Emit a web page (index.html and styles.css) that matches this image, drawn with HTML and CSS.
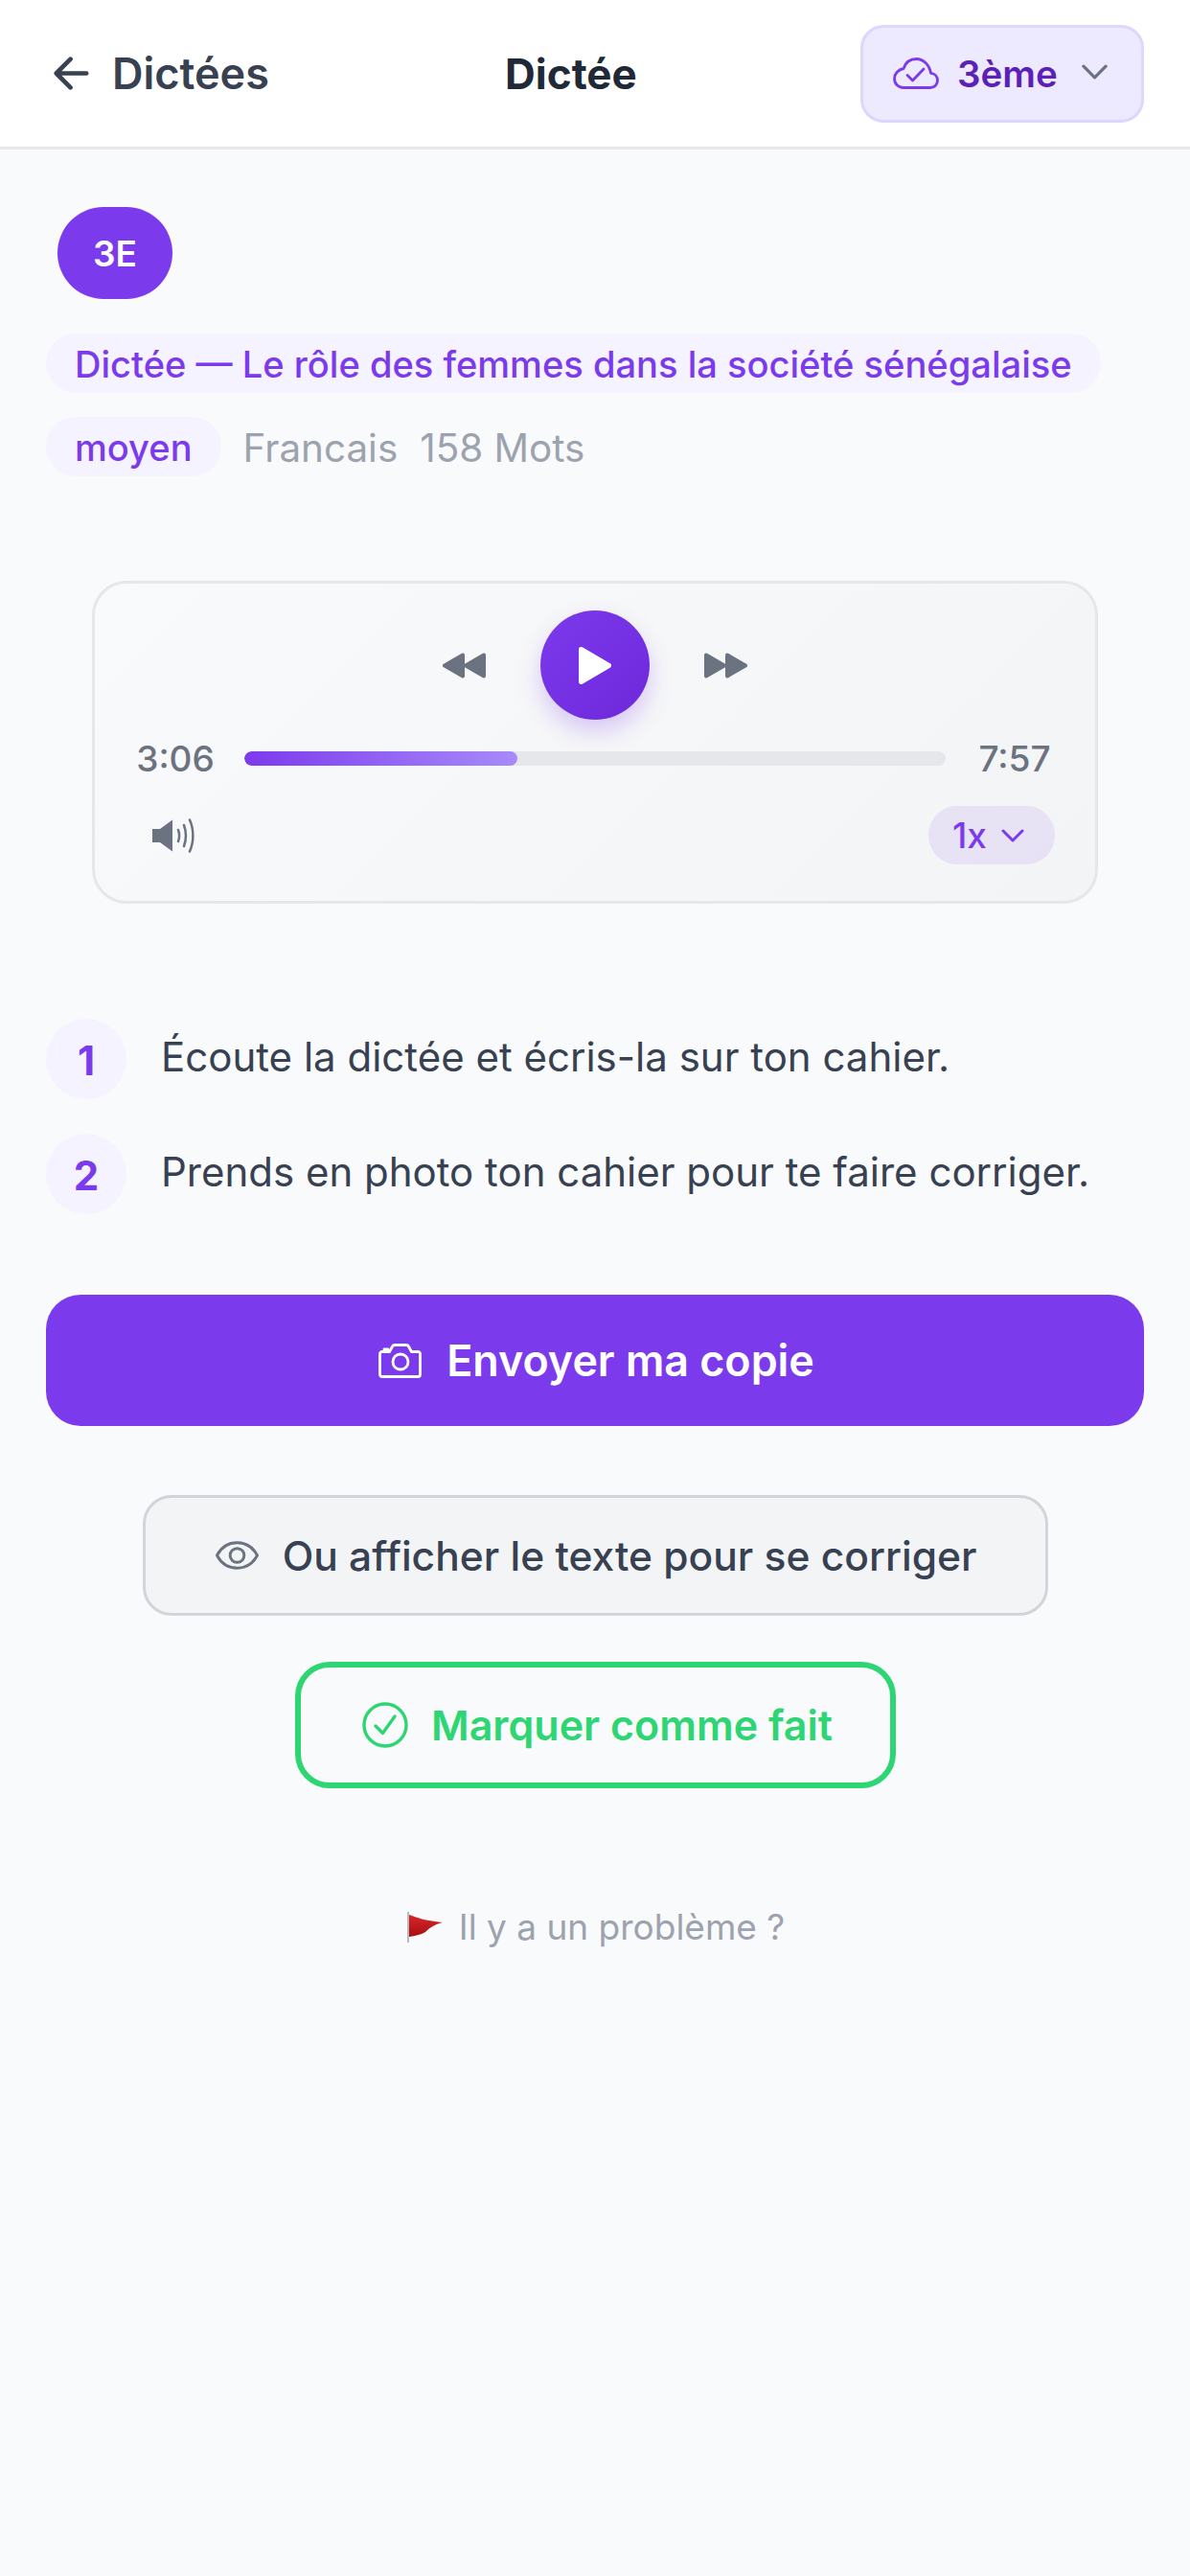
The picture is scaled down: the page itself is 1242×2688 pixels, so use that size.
FILE: index.html
```html
<!DOCTYPE html>
<html lang="fr">
<head>
    <meta charset="UTF-8">
    <title>Dictée</title>
    <link rel="stylesheet" href="styles.css">
</head>
<body>
    <header class="topbar">
        <div class="back">
            <svg class="back-icon" viewBox="0 0 40 40" fill="none" stroke="currentColor" stroke-width="5" stroke-linecap="round" stroke-linejoin="round">
                <path d="M37 20H3M19 4L3 20l16 16"/>
            </svg>
            <span>Dictées</span>
        </div>
        <div class="topbar-title">Dictée</div>
        <div class="level-select">
            <svg class="cloud-icon" viewBox="0 0 48 33" fill="none" stroke="#7c3aed" stroke-width="2.8" stroke-linecap="round" stroke-linejoin="round">
                <path d="M11 31.500h28c4.500 0 7.500-3.500 7.500-7.500 0-4.200-3-7.300-7-7.700C38 8 32 1.500 24.500 1.500c-6.500 0-11.500 4-13.500 10C5.500 12.500 1.500 17 1.500 22c0 5.500 4 9.500 9.500 9.500z"/>
                <path d="M15 18.500l5.500 5.500L32 12"/>
            </svg>
            <span class="level-label">3ème</span>
            <svg class="chevron-grey" viewBox="0 0 28 16" fill="none" stroke="#6b7280" stroke-width="3.400" stroke-linecap="round" stroke-linejoin="round">
                <path d="M2 2l12 12L26 2"/>
            </svg>
        </div>
    </header>

    <main class="page">
        <div class="class-badge">3E</div>
        <div class="chip chip-title">Dictée — Le rôle des femmes dans la société sénégalaise</div>
        <div class="meta-row">
            <div class="chip">moyen</div>
            <span class="meta-text">Francais</span>
            <span class="meta-text">158 Mots</span>
        </div>

        <!-- Audio player -->
        <section class="player">
            <div class="player-controls">
                <svg class="skip-icon" viewBox="0 0 45 27" fill="#6b7280" stroke="#6b7280" stroke-width="4" stroke-linejoin="round">
                    <path d="M2 13.500L21 2.500v22zM24 13.500L43 2.500v22z"/>
                </svg>
                <div class="play-btn">
                    <svg class="play-icon" viewBox="0 0 34 39" fill="#fff" stroke="#fff" stroke-width="5" stroke-linejoin="round">
                        <path d="M2.500 2.500l29 17-29 17z"/>
                    </svg>
                </div>
                <svg class="skip-icon" viewBox="0 0 45 27" fill="#6b7280" stroke="#6b7280" stroke-width="4" stroke-linejoin="round">
                    <path d="M2 2.500l19 11-19 11zM24 2.500l19 11-19 11z"/>
                </svg>
            </div>
            <div class="progress-row">
                <span class="time">3:06</span>
                <div class="progress-track">
                    <div class="progress-fill" style="width: 39%"></div>
                </div>
                <span class="time">7:57</span>
            </div>
            <div class="player-bottom">
                <svg class="volume-icon" viewBox="0 0 47 36" fill="none" stroke="#6b7280" stroke-width="2.500" stroke-linecap="round">
                    <path d="M1 11h8L22 1.500v33L9 25H1z" fill="#6b7280" stroke="none"/>
                    <path d="M28 12c1.500 4 1.500 8 0 12"/>
                    <path d="M34 7c2.500 7 2.500 15 0 22"/>
                    <path d="M40 1.500c4.500 10 4.500 23 0 33"/>
                </svg>
                <div class="speed-select">
                    <span>1x</span>
                    <svg class="chevron-purple" viewBox="0 0 24 14" fill="none" stroke="#7c3aed" stroke-width="3" stroke-linecap="round" stroke-linejoin="round">
                        <path d="M2 2l10 10L22 2"/>
                    </svg>
                </div>
            </div>
        </section>

        <ol class="steps">
            <li class="step">
                <span class="step-num">1</span>
                <span class="step-text">Écoute la dictée et écris-la sur ton cahier.</span>
            </li>
            <li class="step">
                <span class="step-num">2</span>
                <span class="step-text">Prends en photo ton cahier pour te faire corriger.</span>
            </li>
        </ol>

        <div class="btn btn-primary">
            <svg class="camera-icon" viewBox="0 0 46 36" fill="none" stroke="#fff" stroke-width="2.800" stroke-linecap="round" stroke-linejoin="round">
                <path d="M3.500 8.500h8l3-5.500c.5-1 1.200-1.500 2.500-1.500h12c1.300 0 2 .5 2.500 1.500l3 5.500h7c1 0 2 1 2 2v21.500c0 1.500-1 2.500-2 2.500H3.500c-1 0-2-1-2-2.500V10.500c0-1 1-2 2-2z"/>
                <path d="M6 8.500V6h4"/>
                <circle cx="23" cy="19" r="8"/>
            </svg>
            <span>Envoyer ma copie</span>
        </div>

        <div class="btn btn-secondary">
            <svg class="eye-icon" viewBox="0 0 46 30" fill="none" stroke="#6b7280" stroke-width="3" stroke-linecap="round" stroke-linejoin="round">
                <path d="M1.500 15C6 6.500 14 1.500 23 1.500S40 6.500 44.500 15C40 23.500 32 28.500 23 28.500S6 23.500 1.500 15z"/>
                <circle cx="23" cy="15" r="7.500"/>
            </svg>
            <span>Ou afficher le texte pour se corriger</span>
        </div>

        <div class="btn btn-done">
            <svg class="check-icon" viewBox="0 0 48 48" fill="none" stroke="#2ed573" stroke-width="3.400" stroke-linecap="round" stroke-linejoin="round">
                <circle cx="24" cy="24" r="22"/>
                <path d="M14 25l7.500 7.500L34 15"/>
            </svg>
            <span>Marquer comme fait</span>
        </div>

        <div class="report">
            <svg class="flag-icon" viewBox="0 0 38 32">
                <defs>
                    <linearGradient id="flag-red" x1="0" y1="0" x2="0" y2="1">
                        <stop offset="0" stop-color="#d8262a"/>
                        <stop offset="1" stop-color="#a90f12"/>
                    </linearGradient>
                </defs>
                <path d="M1 0v32" stroke="#9ca3af" stroke-width="1.500"/>
                <path d="M2 3c8 3 16 6 35 8-8 2-13 5-18 10-5 3-11 4-17 5z" fill="url(#flag-red)"/>
            </svg>
            <span>Il y a un problème ?</span>
        </div>
    </main>
</body>
</html>
```

FILE: styles.css
```css
:root {
    --primary: #7c3aed;
    --primary-dark: #5b21b6;
    --primary-soft: #f5f3ff;
    --text-dark: #1f2937;
    --text-main: #374151;
    --text-grey: #6b7280;
    --text-light: #9ca3af;
    --green: #2ed573;
}

* {
    margin: 0;
    padding: 0;
    box-sizing: border-box;
}

body {
    min-height: 2688px;
    background: #f9fafb;
    font-family: Inter, "Noto Sans", sans-serif;
    color: var(--text-main);
}

/* Top bar */
.topbar {
    height: 156px;
    padding: 0 48px 0 56px;
    background: #fff;
    border-bottom: 3px solid #e5e7eb;
    display: flex;
    align-items: center;
    justify-content: space-between;
}

.back {
    display: flex;
    align-items: center;
    gap: 24px;
    padding-right: 13px;
    font-size: 45px;
    font-weight: 600;
    color: var(--text-main);
}

.back-icon {
    width: 37px;
    height: 37px;
}

.topbar-title {
    font-size: 44px;
    font-weight: 700;
    color: var(--text-dark);
}

.level-select {
    width: 296px;
    height: 102px;
    background: #ede9fe;
    border: 3px solid #ddd6fe;
    border-radius: 24px;
    display: flex;
    align-items: center;
    padding-left: 31px;
    font-size: 38.5px;
    font-weight: 600;
    color: var(--primary-dark);
}

.cloud-icon {
    width: 48px;
    height: 33px;
}

.level-label {
    margin-left: 19px;
}

.chevron-grey {
    width: 27px;
    height: 16px;
    margin-left: 25px;
    margin-top: -3px;
}

/* Content */
.page {
    padding: 60px 48px 0;
}

.class-badge {
    width: 120px;
    height: 96px;
    margin-left: 12px;
    border-radius: 48px;
    background: var(--primary);
    color: #fff;
    font-size: 37px;
    font-weight: 600;
    display: flex;
    align-items: center;
    justify-content: center;
}

.chip {
    display: inline-flex;
    align-items: center;
    height: 62px;
    padding: 2px 30px 0;
    border-radius: 31px;
    background: var(--primary-soft);
    color: var(--primary);
    font-size: 38.1px;
    font-weight: 500;
}

.chip-title {
    margin-top: 36px;
}

.meta-row {
    margin-top: 25px;
    display: flex;
    align-items: center;
    gap: 23px;
}

.meta-text {
    padding-top: 2px;
    font-size: 40.4px;
    color: var(--text-light);
}

/* Audio player */
.player {
    width: 1050px;
    height: 337px;
    margin: 109px 0 0 48px;
    padding: 28px 42px 0;
    border: 3px solid #e5e7eb;
    border-radius: 36px;
    background: linear-gradient(135deg, #f9fafb, #f3f4f6);
}

.player-controls {
    display: flex;
    align-items: center;
    justify-content: center;
    gap: 57px;
}

.skip-icon {
    width: 45px;
    height: 27px;
}

.play-btn {
    width: 114px;
    height: 114px;
    border-radius: 50%;
    background: linear-gradient(135deg, #7c3aed, #6d28d9);
    box-shadow: 0 12px 24px rgba(124, 58, 237, 0.25);
    display: flex;
    align-items: center;
    justify-content: center;
}

.play-icon {
    width: 34px;
    height: 39px;
}

.progress-row {
    margin-top: 18px;
    display: flex;
    align-items: center;
    gap: 30px;
}

.time {
    width: 84px;
    text-align: center;
    font-size: 37px;
    font-weight: 500;
    color: var(--text-grey);
}

.progress-track {
    flex: 1;
    height: 15px;
    border-radius: 8px;
    background: #e5e7eb;
    overflow: hidden;
}

.progress-fill {
    height: 100%;
    border-radius: 8px;
    background: linear-gradient(90deg, #7c3aed, #a78bfa);
}

.player-bottom {
    margin-top: 27px;
    display: flex;
    align-items: center;
    justify-content: space-between;
    padding-left: 17px;
}

.volume-icon {
    width: 47px;
    height: 36px;
}

.speed-select {
    width: 132px;
    height: 61px;
    padding-left: 25px;
    border-radius: 30px;
    background: rgba(124, 58, 237, 0.1);
    display: flex;
    align-items: center;
    gap: 15px;
    color: var(--primary);
    font-size: 37px;
    font-weight: 500;
}

.chevron-purple {
    width: 24px;
    height: 14px;
}

/* Steps */
.steps {
    list-style: none;
    margin-top: 120px;
    display: flex;
    flex-direction: column;
    gap: 36px;
}

.step {
    display: flex;
    align-items: center;
    gap: 36px;
    font-size: 42px;
    color: var(--text-main);
}

.step-num {
    width: 84px;
    height: 84px;
    padding-top: 2px;
    border-radius: 50%;
    background: var(--primary-soft);
    color: var(--primary);
    font-weight: 700;
    display: flex;
    align-items: center;
    justify-content: center;
}

.step-text {
    margin-top: -6px;
}

/* Buttons */
.btn {
    display: flex;
    align-items: center;
    justify-content: center;
    margin-left: auto;
    margin-right: auto;
}

.btn-primary {
    height: 137px;
    margin-top: 84px;
    padding-left: 3px;
    gap: 25px;
    border-radius: 36px;
    background: var(--primary);
    color: #fff;
    font-size: 44.8px;
    font-weight: 600;
}

.camera-icon {
    width: 46px;
    height: 36px;
}

.btn-secondary {
    width: 945px;
    height: 126px;
    margin-top: 72px;
    padding-left: 2px;
    gap: 25px;
    border: 3px solid #d1d5db;
    border-radius: 30px;
    background: #f3f4f6;
    font-size: 42.5px;
    font-weight: 500;
}

.eye-icon {
    width: 45px;
    height: 30px;
}

.btn-done {
    width: 627px;
    height: 132px;
    margin-top: 48px;
    padding-left: 5px;
    gap: 24px;
    border: 6px solid var(--green);
    border-radius: 36px;
    color: var(--green);
    font-size: 43px;
    font-weight: 600;
}

.check-icon {
    width: 48px;
    height: 48px;
}

.report {
    margin-top: 122px;
    padding-left: 2px;
    display: flex;
    align-items: center;
    justify-content: center;
    gap: 16px;
    font-size: 37px;
    color: var(--text-light);
}

.flag-icon {
    width: 38px;
    height: 32px;
}
```
